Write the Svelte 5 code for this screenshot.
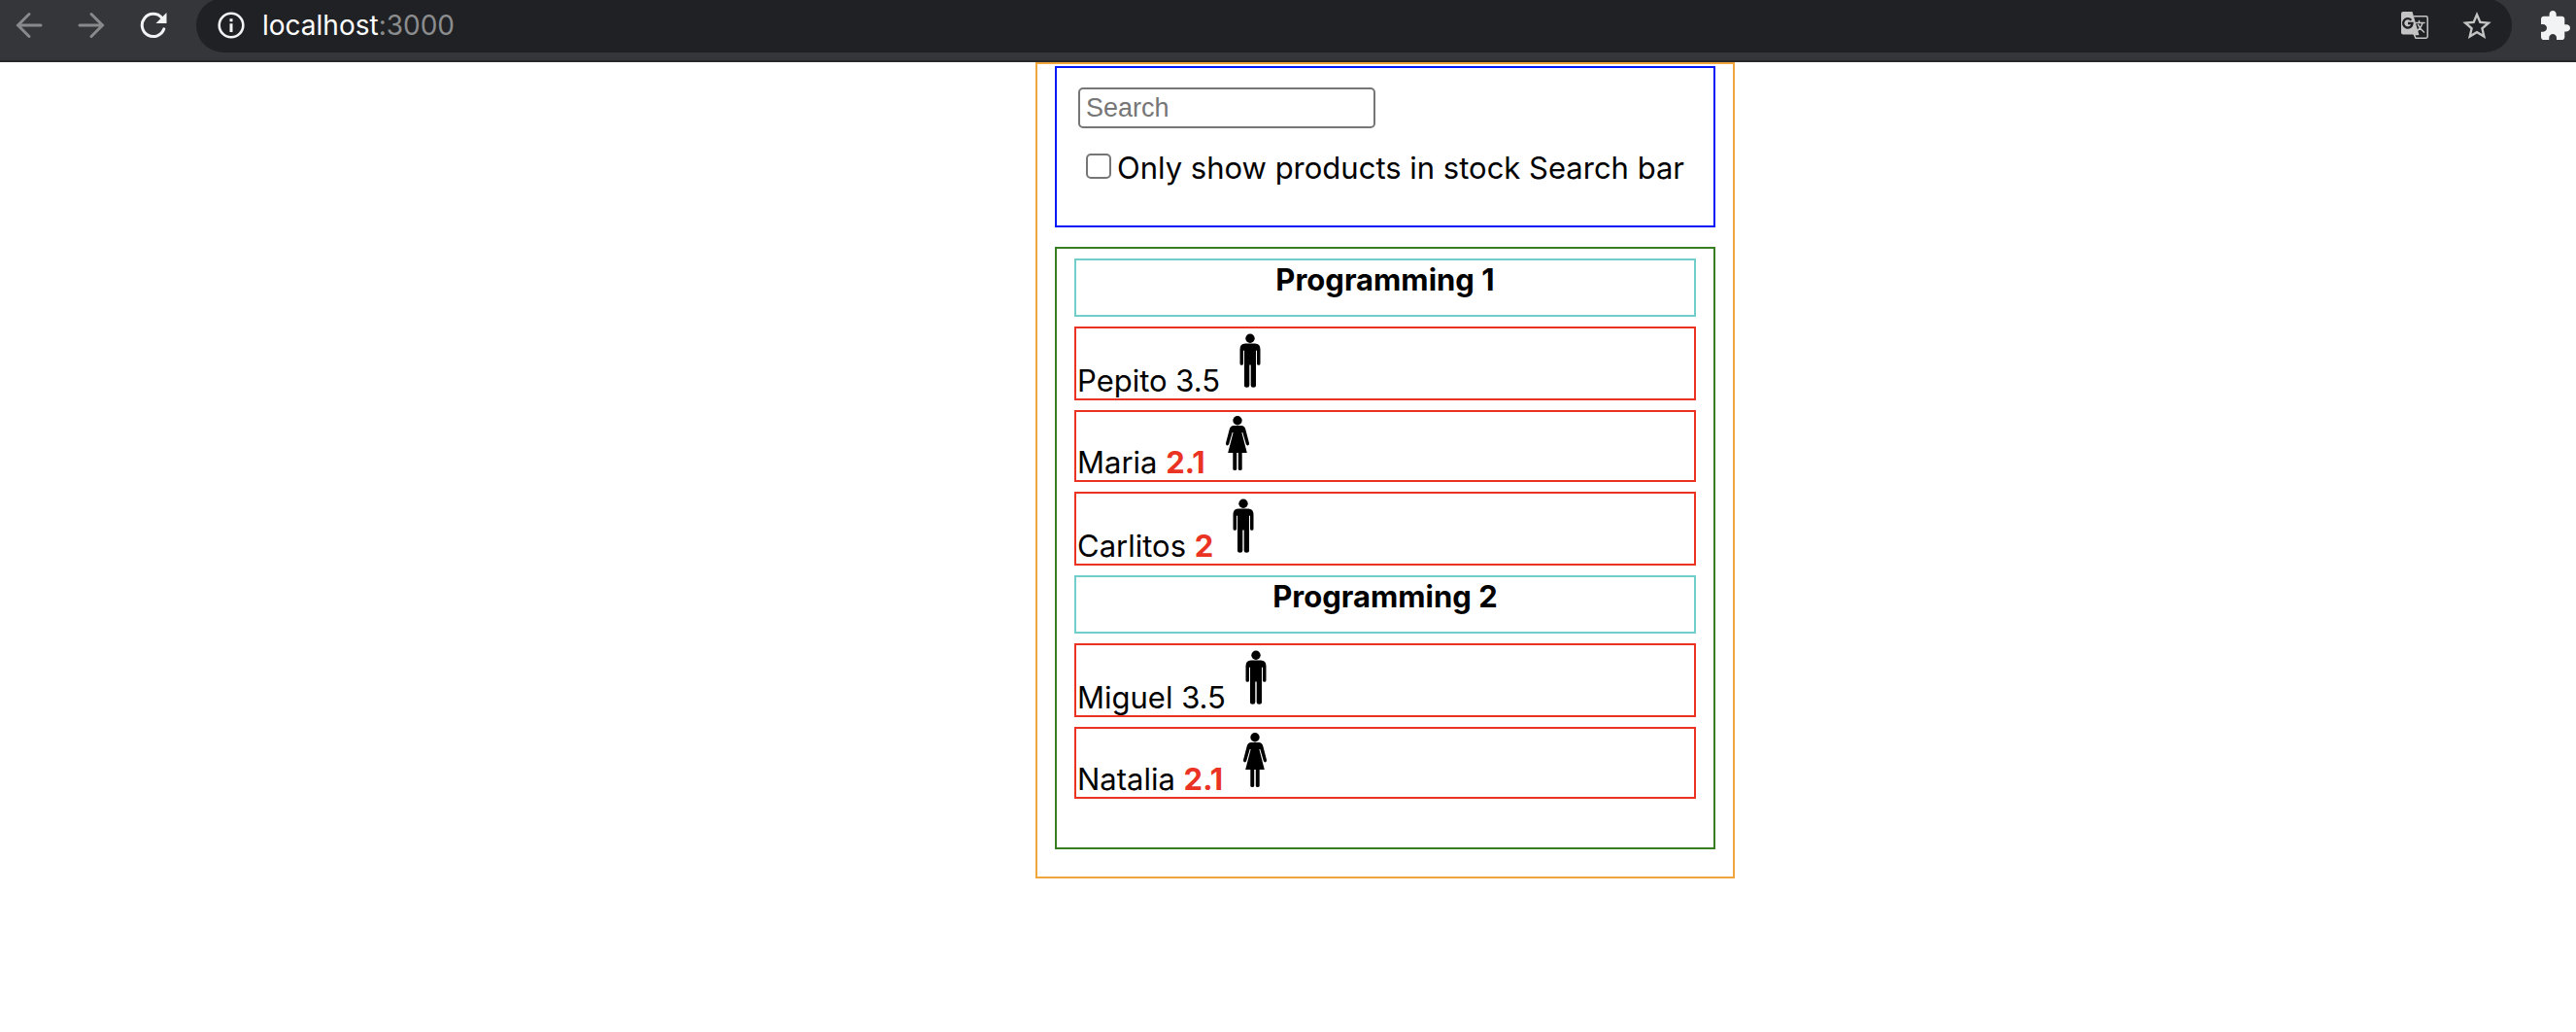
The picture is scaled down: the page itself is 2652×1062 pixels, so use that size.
<script>
  let search = $state('');
  let onlyInStock = $state(false);

  const groups = [
    {
      title: 'Programming 1',
      students: [
        { name: 'Pepito', grade: '3.5', icon: 'man', low: false },
        { name: 'Maria', grade: '2.1', icon: 'woman', low: true },
        { name: 'Carlitos', grade: '2', icon: 'man', low: true }
      ]
    },
    {
      title: 'Programming 2',
      students: [
        { name: 'Miguel', grade: '3.5', icon: 'man', low: false },
        { name: 'Natalia', grade: '2.1', icon: 'woman', low: true }
      ]
    }
  ];
</script>

<header class="toolbar">
  <nav class="nav" aria-label="Browser navigation">
    <button class="tool dim" aria-label="Back">
      <svg width="28" height="28" viewBox="0 0 28 28"><path d="M26 14H3M14 2.500L2.500 14L14 25.500" /></svg>
    </button>
    <button class="tool dim" aria-label="Forward">
      <svg width="28" height="28" viewBox="0 0 28 28"><path d="M2 14H25M14 2.500L25.500 14L14 25.500" /></svg>
    </button>
    <button class="tool" aria-label="Reload">
      <svg width="28" height="28" viewBox="0 0 28 28">
        <path class="arc" d="M24.800 17.800A11.600 11.600 0 1 1 22.500 6.200" />
        <path class="solid" d="M27.500 1V12H16.500Z" />
      </svg>
    </button>
  </nav>
  <div class="address">
    <button class="tool" aria-label="Site information">
      <svg width="28" height="28" viewBox="0 0 28 28">
        <circle class="ring" cx="14" cy="14" r="12.300" />
        <path class="solid" d="M12.500 7.300h3v3h-3zM12.500 12.300h3v8.700h-3z" />
      </svg>
    </button>
    <span class="url">localhost<span class="port">:3000</span></span>
    <button class="tool muted" aria-label="Translate this page">
      <svg width="28" height="28" viewBox="0 0 28 28">
        <path class="solid" d="M2 0H11.500L18.300 23.500H2Q0 23.500 0 21.500V2Q0 0 2 0Z" />
        <path class="thin" d="M13.500 4.800H25.500Q27.200 4.800 27.200 6.500V25.500Q27.200 27.200 25.500 27.200H15L13.300 23.500L17.500 23.500" />
        <path class="thin" d="M15 11.500H24M18.500 9.500V11.500M22 11.500Q20.500 17 16 20M17.500 13.500Q19 17.500 23.500 21" />
        <path class="cut" d="M10.300 8.700A4.700 4.700 0 1 0 11.500 12H7" />
      </svg>
    </button>
    <button class="tool muted" aria-label="Bookmark this page">
      <svg width="30" height="28" viewBox="2 2 20 19">
        <path class="solid" d="M22 9.240l-7.190-.620L12 2 9.190 8.630 2 9.240l5.460 4.730L5.820 21 12 17.270 18.180 21l-1.630-7.030L22 9.240zM12 15.400l-3.760 2.270 1-4.280-3.320-2.880 4.380-.380L12 6.100l1.710 4.040 4.380.380-3.320 2.880 1 4.280L12 15.400z" />
      </svg>
    </button>
  </div>
  <button class="tool" aria-label="Extensions">
    <svg width="30" height="30" viewBox="2 1 21 21">
      <path class="solid" d="M20.500 11H19V7c0-1.100-.900-2-2-2h-4V3.500C13 2.120 11.880 1 10.500 1S8 2.120 8 3.500V5H4c-1.100 0-1.990.900-1.990 2v3.800H3.500c1.490 0 2.700 1.210 2.700 2.700s-1.210 2.700-2.700 2.700H2V20c0 1.100.900 2 2 2h3.800v-1.500c0-1.490 1.210-2.700 2.700-2.700 1.490 0 2.700 1.210 2.700 2.700V22H17c1.100 0 2-.900 2-2v-4h1.500c1.380 0 2.500-1.120 2.500-2.500S21.880 11 20.500 11z" />
    </svg>
  </button>
</header>

<main class="page">
  <div class="app">
    <form class="search-bar">
      <input class="search" type="text" placeholder="Search" aria-label="Search" bind:value={search} />
      <label class="stock">
        <input class="check" type="checkbox" bind:checked={onlyInStock} />
        <span>Only show products in stock Search bar</span>
      </label>
    </form>

    <section class="listing">
      {#each groups as group}
        <h2 class="group">{group.title}</h2>
        {#each group.students as student}
          <div class="row">
            <span class="student">{student.name} <span class:low={student.low}>{student.grade}</span></span>
            {#if student.icon === 'man'}
              <svg class="person" width="28" height="72" viewBox="0 0 28 72" role="img" aria-label="Man">
                <circle cx="14" cy="10.200" r="4.700" />
                <path d="M9 15.500H19Q24.500 15.500 24.500 21.500V36.300Q24.500 37.800 22.800 37.800Q21 37.800 21 36.300V22.800H20V58.500Q20 60.700 17.300 60.700Q14.700 60.700 14.700 58.500V37.500H13.300V58.500Q13.300 60.700 10.700 60.700Q8 60.700 8 58.500V22.800H7V36.300Q7 37.800 5.200 37.800Q3.500 37.800 3.500 36.300V21.500Q3.500 15.500 9 15.500Z" />
              </svg>
            {:else}
              <svg class="person" width="30" height="70" viewBox="-2 0 30 70" role="img" aria-label="Woman">
                <circle cx="14" cy="8.700" r="4.700" />
                <path d="M10 14H18Q21.200 14 22.200 17.500L26 32Q26.300 34 24.700 34.400Q23.300 34.500 22.800 33L19.300 21H18.400L23.800 42H18.700V58.800Q18.700 60 16.700 60Q14.800 60 14.800 58.800V42H13.200V58.800Q13.200 60 11.300 60Q9.300 60 9.300 58.800V42H4.200L9.600 21H8.700L5.200 33Q4.700 34.500 3.300 34.400Q1.700 34 2 32L5.800 17.500Q6.800 14 10 14Z" />
              </svg>
            {/if}
          </div>
        {/each}
      {/each}
    </section>
  </div>
</main>

<style>
  :global(body) {
    margin: 0;
    background: #fff;
    color: #000;
    font-family: Inter, "Liberation Sans", sans-serif;
  }

  .toolbar {
    display: flex;
    align-items: flex-start;
    box-sizing: border-box;
    height: 64px;
    padding-right: 6px;
    overflow: hidden;
    background: #35363a;
    border-bottom: 2px solid #27282a;
  }

  .nav {
    display: flex;
    gap: 36px;
    padding: 12px 30px 0 16px;
  }

  .toolbar > .tool {
    margin-top: 11px;
  }

  .tool {
    display: flex;
    padding: 0;
    border: 0;
    background: none;
    color: #f1f3f4;
  }

  .tool svg {
    fill: none;
    stroke: currentColor;
    stroke-width: 3;
    stroke-linecap: round;
  }

  .tool .arc {
    stroke-width: 3;
  }

  .tool .ring {
    stroke-width: 2.6;
  }

  .tool .solid {
    fill: currentColor;
    stroke: none;
  }

  .tool .thin {
    stroke-width: 1.5;
  }

  .tool .cut {
    stroke: #202124;
    stroke-width: 2.4;
    stroke-linecap: butt;
  }

  .tool.dim {
    color: #88898b;
  }

  .tool.muted {
    color: #c4c4c4;
  }

  .address {
    display: flex;
    flex: 1;
    align-items: center;
    box-sizing: border-box;
    height: 56px;
    margin: -2px 30px 0 0;
    padding: 0 21px 0 22px;
    border-radius: 28px;
    background: #202124;
  }

  .address .muted + .muted {
    margin-left: 35px;
  }

  .url {
    flex: 1;
    margin-left: 18px;
    color: #fff;
    font-size: 28px;
    line-height: 36px;
  }

  .port {
    color: #8b8c8e;
  }

  .page {
    display: flex;
    justify-content: center;
    padding-left: 200px;
    font-size: 31px;
  }

  .app {
    display: flex;
    flex-direction: column;
    gap: 20px;
    box-sizing: border-box;
    width: 720px;
    padding: 2px 18px 28px;
    border: 2px solid #f0a63c;
  }

  .search-bar {
    display: flex;
    flex-direction: column;
    align-items: flex-start;
    gap: 20px;
    padding: 20px 22px 38px;
    border: 2px solid #0018f5;
  }

  .search {
    box-sizing: border-box;
    width: 306px;
    height: 42px;
    padding: 0 6px;
    border: 2px solid #767676;
    border-radius: 5px;
    background: #fff;
    font-family: "Liberation Sans", Arial, sans-serif;
    font-size: 27px;
  }

  .search::placeholder {
    color: #767676;
    opacity: 1;
  }

  .stock {
    display: flex;
    align-items: center;
    gap: 6px;
    padding-left: 8px;
    line-height: 42px;
  }

  .check {
    appearance: none;
    box-sizing: border-box;
    width: 26px;
    height: 26px;
    margin: 0 0 4px;
    border: 2px solid #767676;
    border-radius: 5px;
    background: #fff;
  }

  .check:checked {
    background: #0075ff;
  }

  .listing {
    display: flex;
    flex-direction: column;
    gap: 10px;
    padding: 10px 18px 50px;
    border: 2px solid #377e22;
  }

  .group {
    margin: 0;
    padding-bottom: 16px;
    border: 2px solid #70cfca;
    font-size: 31px;
    font-weight: 700;
    line-height: 40px;
    text-align: center;
  }

  .row {
    display: flex;
    align-items: flex-end;
    gap: 17px;
    padding-left: 1px;
    border: 2px solid #ea3323;
  }

  .student {
    line-height: 36px;
  }

  .low {
    color: #ea3323;
    font-weight: 700;
  }

  .person {
    display: block;
  }
</style>
